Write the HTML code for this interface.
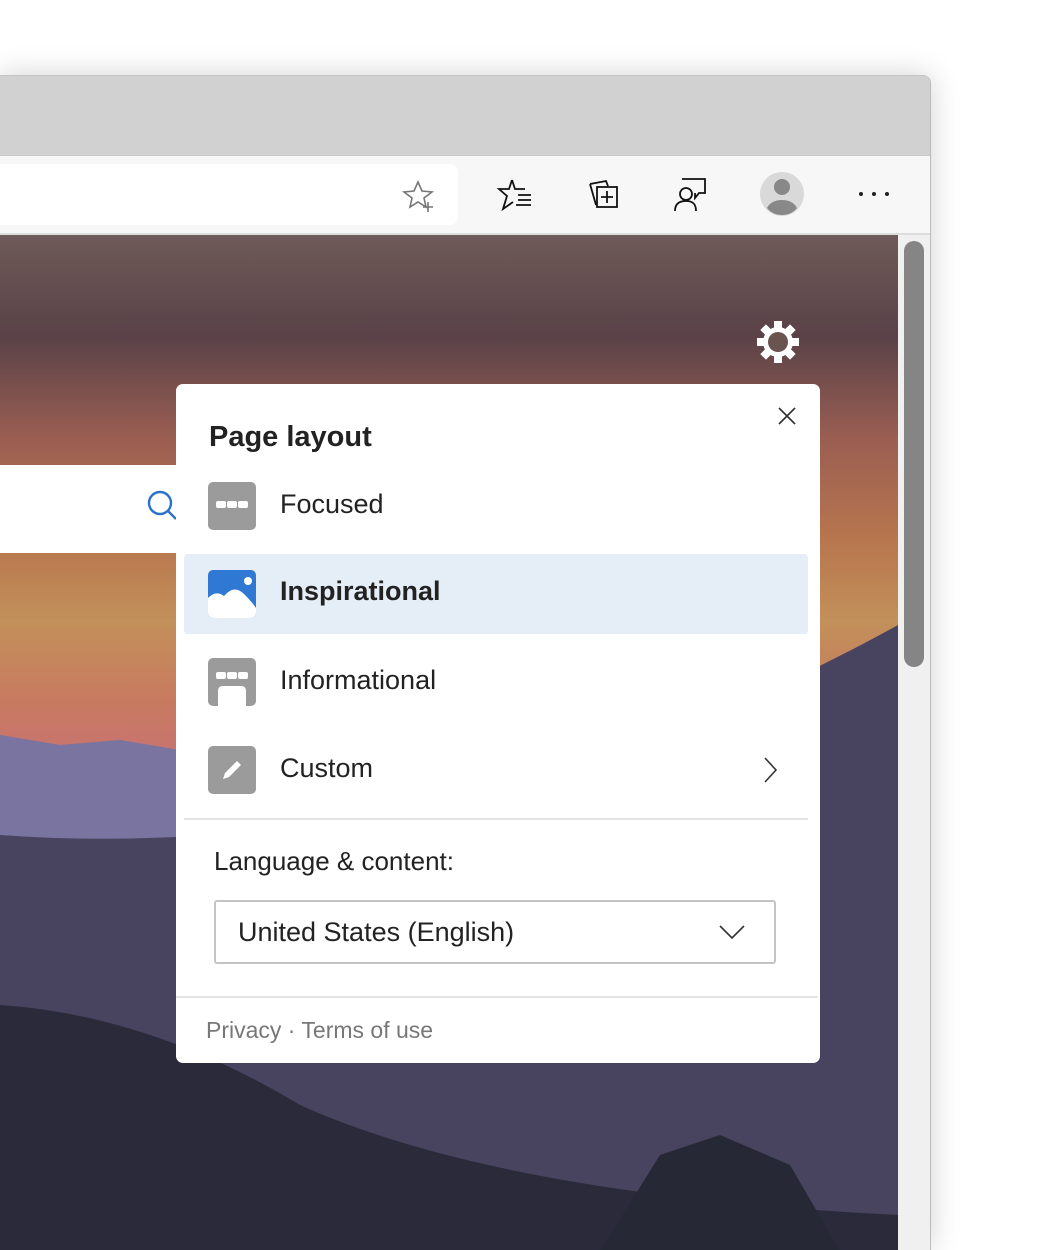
<!DOCTYPE html>
<html><head><meta charset="utf-8"><style>
*{margin:0;padding:0;box-sizing:border-box}
body{width:1042px;height:1250px;overflow:hidden;background:#fff;font-family:"Liberation Sans",sans-serif;position:relative;color:#222}
.abs{position:absolute}
</style></head><body>
<div class="abs" style="left:0;top:75px;width:931px;height:1175px;box-shadow:0 0 30px rgba(0,0,0,.18);border-right:1px solid #bbb;border-top:1px solid #c4c4c4;border-top-right-radius:8px;overflow:hidden;background:#f7f7f7">
 <div class="abs" style="left:0;top:0;width:931px;height:80px;background:#d1d1d1;border-bottom:1px solid #c8c8c8"></div>
 <div class="abs" style="left:0;top:88px;width:458px;height:61px;background:#fff;border-radius:0 8px 8px 0"></div>
 <div class="abs" style="left:0;top:157px;width:931px;height:2px;background:#ddd"></div>
 <svg class="abs" style="left:0;top:0" width="931" height="160">
  <g fill="none" stroke="#777" stroke-width="1.6"><path d="M418 106 L422 115 L432 116 L424 122 L426 131 L418 126 L410 131 L412 122 L404 116 L414 115 Z"/><path d="M428 126v10M423 131h10"/></g>
  <g fill="none" stroke="#111" stroke-width="1.8"><path d="M512 104 L515 113 L525 113 M512 104 L509 113 L499 113 L507 120 L503 133 L513 126"/><path d="M518 119h13M518 124h13M516 129h15"/></g>
  <g fill="none" stroke="#111" stroke-width="1.8"><path d="M590 108l16-3 2 5M590 108l6 21"/><rect x="597" y="111" width="20" height="20"/><path d="M607 115v12M601 121h12"/></g>
  <g fill="none" stroke="#111" stroke-width="1.8"><path d="M682 103h23v14h-6l-4 5v-5"/><circle cx="686" cy="118" r="6"/><path d="M675 135c0-7 4-10 11-10s10 3 10 10"/></g>
  <circle cx="782" cy="118" r="22" fill="#d9d9d9"/><circle cx="782" cy="111" r="8" fill="#888"/><path d="M767 132c3-6 9-8 15-8s12 2 15 8c-4 5-9 7-15 7s-11-2-15-7z" fill="#888"/>
  <g fill="#222"><circle cx="861" cy="118" r="2"/><circle cx="874" cy="118" r="2"/><circle cx="887" cy="118" r="2"/></g>
 </svg>
 <div class="abs" style="left:0;top:159px;width:898px;height:1016px;overflow:hidden">
  <svg width="898" height="1016" viewBox="0 0 898 1016">
   <defs><linearGradient id="sky" x1="0" y1="0" x2="0" y2="1">
    <stop offset="0" stop-color="#6e5a58"/><stop offset=".1" stop-color="#5a4248"/><stop offset=".2" stop-color="#9a5e52"/><stop offset=".3" stop-color="#b8764e"/><stop offset=".38" stop-color="#c2905a"/><stop offset=".46" stop-color="#c87a60"/><stop offset=".54" stop-color="#c8707a"/><stop offset=".6" stop-color="#8b7ca0"/><stop offset="1" stop-color="#6a6898"/></linearGradient></defs>
   <rect width="898" height="1016" fill="url(#sky)"/>
   <path d="M0 500 L60 510 L120 505 L180 515 L300 505 L420 500 L600 490 L760 470 L898 460 V1016 H0Z" fill="#7a74a0"/>
   <path d="M0 600 Q200 615 450 570 Q700 500 898 390 V1016 H0Z" fill="#48435e"/>
   <path d="M0 770 Q150 780 300 870 Q500 960 898 980 V1016 H0Z" fill="#2a2a3a"/>
   <path d="M600 1016 L660 920 L720 900 L790 930 L840 1016Z" fill="#262836"/>
  </svg>
  <div class="abs" style="left:0;top:230px;width:180px;height:88px;background:#fff"></div>
  <svg class="abs" style="left:140px;top:250px" width="40" height="40"><circle cx="20" cy="18" r="11" fill="none" stroke="#2a72c8" stroke-width="2.4"/><path d="M28 26l8 8" stroke="#2a72c8" stroke-width="2.4"/></svg>
  <svg class="abs" style="left:756px;top:85px" width="44" height="44" viewBox="-22 -22 44 44"><g fill="#fff"><circle r="15"/><g id="t"><rect x="-4" y="-21" width="8" height="9"/></g><use href="#t" transform="rotate(45)"/><use href="#t" transform="rotate(90)"/><use href="#t" transform="rotate(135)"/><use href="#t" transform="rotate(180)"/><use href="#t" transform="rotate(225)"/><use href="#t" transform="rotate(270)"/><use href="#t" transform="rotate(315)"/></g><circle r="10" fill="#6a5450"/></svg>
 </div>
 <div class="abs" style="left:898px;top:159px;width:33px;height:1016px;background:#f0f0f0"></div>
 <div class="abs" style="left:904px;top:165px;width:20px;height:426px;background:#858585;border-radius:10px"></div>
</div>

<div class="abs" style="left:176px;top:384px;width:644px;height:679px;background:#fff;border-radius:7px">
 <svg class="abs" style="left:601px;top:22px" width="20" height="20"><path d="M2 2l16 16M18 2L2 18" stroke="#333" stroke-width="1.6"/></svg>
 <div class="abs" style="left:33px;top:37px;font-size:29px;font-weight:bold;color:#222">Page layout</div>
 <div class="abs" style="left:32px;top:98px;width:48px;height:48px;background:#9b9b9b;border-radius:5px"><svg width="48" height="48"><g fill="#fff"><rect x="8" y="19" width="10" height="7" rx="2"/><rect x="19" y="19" width="10" height="7" rx="2"/><rect x="30" y="19" width="10" height="7" rx="2"/></g></svg></div>
 <div class="abs" style="left:104px;top:105px;font-size:27px">Focused</div>
 <div class="abs" style="left:8px;top:170px;width:624px;height:80px;background:#e5edf7;border-radius:4px"></div>
 <div class="abs" style="left:32px;top:186px;width:48px;height:48px;background:#2f78d4;border-radius:5px;overflow:hidden"><svg width="48" height="48"><circle cx="40" cy="11" r="4" fill="#fff"/><path d="M0 28 Q8 20 16 26 Q26 14 36 24 Q44 32 48 38 V48 H0Z" fill="#fff"/></svg></div>
 <div class="abs" style="left:104px;top:192px;font-size:27px;font-weight:bold">Inspirational</div>
 <div class="abs" style="left:32px;top:274px;width:48px;height:48px;background:#9b9b9b;border-radius:5px"><svg width="48" height="48"><g fill="#fff"><rect x="8" y="14" width="10" height="7" rx="2"/><rect x="19" y="14" width="10" height="7" rx="2"/><rect x="30" y="14" width="10" height="7" rx="2"/><path d="M10 48 V33 Q10 28 15 28 H33 Q38 28 38 33 V48Z"/></g></svg></div>
 <div class="abs" style="left:104px;top:281px;font-size:27px">Informational</div>
 <div class="abs" style="left:32px;top:362px;width:48px;height:48px;background:#9b9b9b;border-radius:5px"><svg width="48" height="48"><path d="M15 33l2-6 12-12 4 4-12 12z" fill="#fff"/></svg></div>
 <div class="abs" style="left:104px;top:369px;font-size:27px">Custom</div>
 <svg class="abs" style="left:586px;top:372px" width="16" height="28"><path d="M3 2l11 12L3 26" fill="none" stroke="#333" stroke-width="1.6"/></svg>
 <div class="abs" style="left:8px;top:434px;width:624px;height:2px;background:#e4e4e4"></div>
 <div class="abs" style="left:38px;top:462px;font-size:26px">Language &amp; content:</div>
 <div class="abs" style="left:38px;top:516px;width:562px;height:64px;border:2px solid #c4c4c4;border-radius:3px"></div>
 <div class="abs" style="left:62px;top:533px;font-size:27px">United States (English)</div>
 <svg class="abs" style="left:542px;top:540px" width="28" height="16"><path d="M2 2l12 12L26 2" fill="none" stroke="#333" stroke-width="1.6"/></svg>
 <div class="abs" style="left:0;top:612px;width:642px;height:2px;background:#e4e4e4"></div>
 <div class="abs" style="left:30px;top:633px;font-size:23px;color:#777">Privacy · Terms of use</div>
</div>
</body></html>
